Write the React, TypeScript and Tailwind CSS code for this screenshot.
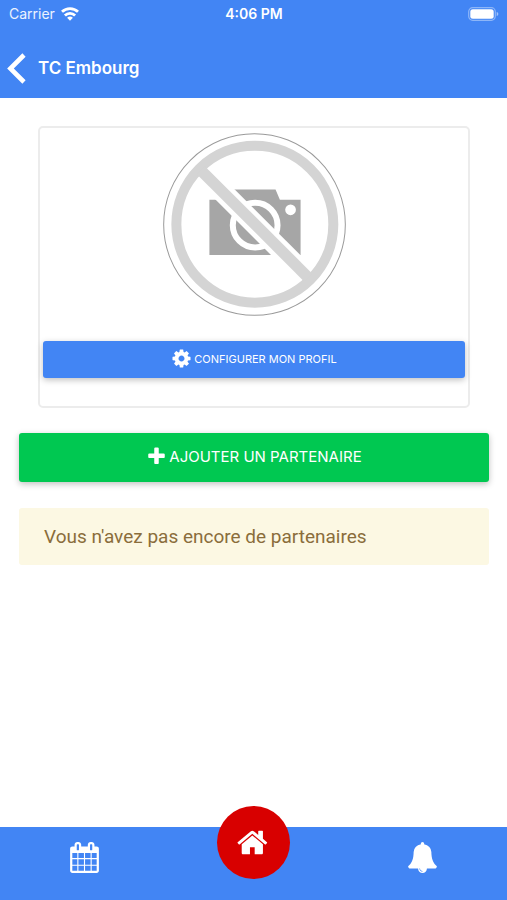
import type { ReactNode } from "react";

const CALENDAR =
  "M192 1664h288v-288h-288v288zm352 0h320v-288h-320v288zm-352-352h288v-320h-288v320zm352 0h320v-320h-320v320zm-352-384h288v-288h-288v288zm736 736h320v-288h-320v288zm-384-736h320v-288h-320v288zm768 736h288v-288h-288v288zm-384-352h320v-320h-320v320zm-352-864v-288q0-13-9.5-22.5t-22.5-9.5h-64q-13 0-22.5 9.5t-9.5 22.5v288q0 13 9.5 22.5t22.5 9.5h64q13 0 22.5-9.5t9.5-22.5zm736 864h288v-320h-288v320zm-384-384h320v-288h-320v288zm384 0h288v-288h-288v288zm32-480v-288q0-13-9.5-22.5t-22.5-9.5h-64q-13 0-22.5 9.5t-9.5 22.5v288q0 13 9.5 22.5t22.5 9.5h64q13 0 22.5-9.5t9.5-22.5zm384-64v1280q0 52-38 90t-90 38h-1408q-52 0-90-38t-38-90v-1280q0-52 38-90t90-38h128v-96q0-66 47-113t113-47h64q66 0 113 47t47 113v96h384v-96q0-66 47-113t113-47h64q66 0 113 47t47 113v96h128q52 0 90 38t38 90z";
const HOME =
  "M1408 992v480q0 26-19 45t-45 19h-384v-384h-256v384h-384q-26 0-45-19t-19-45v-480q0-1 .5-3t.5-3l575-474 575 474q1 2 1 6zm223-69l-62 74q-8 9-21 11h-3q-13 0-21-7l-692-577-692 577q-12 8-24 7-13-2-21-11l-62-74q-8-10-7-23.5t11-21.5l719-599q32-26 76-26t76 26l244 204v-195q0-14 9-23t23-9h192q14 0 23 9t9 23v408l219 182q10 8 11 21.5t-7 23.5z";
const BELL =
  "M912 1696q0-16-16-16-59 0-101.5-42.5t-42.5-101.5q0-16-16-16t-16 16q0 73 51.5 124.5t124.5 51.5q16 0 16-16zm816-288q0 52-38 90t-90 38h-448q0 106-75 181t-181 75-181-75-75-181h-448q-52 0-90-38t-38-90q50-42 91-88t85-119.5 74.5-158.5 50-206 19.5-260q0-152 117-282.5t307-158.5q-8-19-8-39 0-40 28-68t68-28 68 28 28 68q0 20-8 39 190 28 307 158.5t117 282.5q0 139 19.5 260t50 206 74.5 158.5 85 119.5 91 88z";
const COG =
  "M1152 896q0-106-75-181t-181-75-181 75-75 181 75 181 181 75 181-75 75-181zm512-109v222q0 12-8 23t-20 13l-185 28q-19 54-39 91 35 50 107 138 10 12 10 25t-9 23q-27 37-99 108t-94 71q-12 0-26-9l-138-108q-44 23-91 38-16 136-29 186-7 28-36 28h-222q-14 0-24.5-8.5t-11.5-21.5l-28-184q-49-16-90-37l-141 107q-10 9-25 9-14 0-25-11-126-114-165-168-7-10-7-23 0-12 8-23 15-21 51-66.5t54-70.5q-27-50-41-99l-183-27q-13-2-21-12.5t-8-23.5v-222q0-12 8-23t19-13l186-28q14-46 39-92-40-57-107-138-10-12-10-24 0-10 9-23 26-36 98.5-107.5t94.5-71.5q13 0 26 10l138 107q44-23 91-38 16-136 29-186 7-28 36-28h222q14 0 24.5 8.5t11.5 21.5l28 184q49 16 90 37l142-107q9-9 24-9 13 0 25 10 129 119 165 170 7 8 7 22 0 12-8 23-15 21-51 66.5t-54 70.5q26 50 41 98l183 28q13 2 21 12.5t8 23.5z";
const PLUS =
  "M1600 736v192q0 40-28 68t-68 28h-416v416q0 40-28 68t-68 28h-192q-40 0-68-28t-28-68v-416h-416q-40 0-68-28t-28-68v-192q0-40 28-68t68-28h416v-416q0-40 28-68t68-28h192q40 0 68 28t28 68v416h416q40 0 68 28t28 68z";

function Icon({ path, className }: { path: string; className: string }) {
  return (
    <svg viewBox="0 0 1792 1792" className={className} fill="currentColor" aria-hidden="true">
      <path d={path} />
    </svg>
  );
}

function StatusBar() {
  return (
    <div className="grid h-7 grid-cols-3 items-center pr-2 pl-[9px] text-sm">
      <div className="flex items-center gap-[6px]">
        <span className="text-white/90">Carrier</span>
        <svg viewBox="0 0 18 14" className="h-[14px] w-[18px]" fill="none" stroke="white" strokeWidth="2.8" aria-hidden="true">
          <path d="M1 4.8a11.5 11.5 0 0 1 16 0" />
          <path d="M3.9 8.4a7.2 7.2 0 0 1 10.2 0" />
          <path d="M9 13.7l-2.9-2.9a4.2 4.2 0 0 1 5.8 0z" fill="white" stroke="none" />
        </svg>
      </div>
      <span className="text-center font-semibold whitespace-nowrap">4:06 PM</span>
      <svg viewBox="0 0 31 14" className="h-[14px] w-[31px] justify-self-end" aria-hidden="true">
        <rect x="0.7" y="0.7" width="26.6" height="12.6" rx="4" fill="none" stroke="white" strokeOpacity="0.4" strokeWidth="1.2" />
        <rect x="2.3" y="2.3" width="23.4" height="9.4" rx="2.5" fill="white" />
        <path d="M28.7 5v4c1-.4 1.6-1.1 1.6-2s-.6-1.6-1.6-2z" fill="white" fillOpacity="0.5" />
      </svg>
    </div>
  );
}

function NoPhoto() {
  return (
    <svg viewBox="0 0 548 548" className="mx-auto size-[183px]" role="img" aria-label="Pas de photo">
      <circle cx="274" cy="274" r="272" fill="white" stroke="#9a9a9a" strokeWidth="3" />
      <path d="M139 200h73v-31h125l13 31h62v165H139z" fill="#a6a6a6" />
      <circle cx="276" cy="276" r="67" fill="none" stroke="white" strokeWidth="18" />
      <circle cx="382" cy="230" r="16" fill="white" />
      <path d="M119 117l314 314" stroke="white" strokeWidth="62" />
      <circle cx="275" cy="273" r="235" fill="none" stroke="#d4d4d4" strokeWidth="30" />
      <path d="M114 112l322 322" stroke="#d4d4d4" strokeWidth="34" />
    </svg>
  );
}

function TabButton({ label, children }: { label: string; children: ReactNode }) {
  return (
    <button type="button" aria-label={label} className="flex h-full items-start justify-center pt-[15px]">
      {children}
    </button>
  );
}

export default function App() {
  return (
    <div className="flex min-h-screen flex-col bg-white font-[Inter,'Liberation_Sans',sans-serif]">
      <header className="bg-[#4285f4] text-white">
        <StatusBar />
        <div className="flex h-[70px] items-center gap-3 pt-[20px] pb-[9px] pl-[7px]">
          <button type="button" aria-label="Retour" className="shrink-0">
            <svg viewBox="0 0 19 31" className="h-[31px] w-[19px]" fill="none" stroke="white" strokeWidth="4.6" aria-hidden="true">
              <path d="M17 2L3.400 15.500 17 29" />
            </svg>
          </button>
          <h1 className="text-[17px] font-semibold">TC Embourg</h1>
        </div>
      </header>

      <main className="flex flex-1 flex-col pt-7 pr-[18px] pl-[19px]">
        <section className="mx-[19px] rounded-[5px] border-2 border-[#ececec] px-[3px] pt-[5px] pb-7">
          <NoPhoto />
          <button
            type="button"
            className="mt-[25px] flex h-[37px] w-full items-center justify-center gap-[2px] rounded-[3px] bg-[#4285f4] text-[11px] text-white uppercase shadow-[0_2px_6px_rgba(0,0,0,0.25)]"
          >
            <Icon path={COG} className="mb-[3px] size-[21px]" />
            Configurer mon profil
          </button>
        </section>

        <button
          type="button"
          className="mt-[25px] flex h-[49px] items-center justify-center gap-[2px] rounded-[3px] bg-[#00c851] text-[15px] text-white uppercase shadow-[0_2px_6px_rgba(0,0,0,0.25)]"
        >
          <Icon path={PLUS} className="mb-[3px] size-[21px]" />
          Ajouter un partenaire
        </button>

        <p className="mt-[26px] rounded-[3px] bg-[#fcf8e3] px-[25px] py-4 font-[Roboto,'Liberation_Sans',sans-serif] text-[19px] leading-[25px] text-[#8a6d3b]">
          Vous n'avez pas encore de partenaires
        </p>
      </main>

      <nav className="grid h-[73px] grid-cols-3 bg-[#4285f4] text-white">
        <TabButton label="Calendrier">
          <Icon path={CALENDAR} className="size-[31px]" />
        </TabButton>
        <button
          type="button"
          aria-label="Accueil"
          className="-mt-[21px] flex size-[73px] items-center justify-center justify-self-center rounded-full bg-[#d80000]"
        >
          <Icon path={HOME} className="size-[33px]" />
        </button>
        <TabButton label="Notifications">
          <Icon path={BELL} className="size-[31px]" />
        </TabButton>
      </nav>
    </div>
  );
}
